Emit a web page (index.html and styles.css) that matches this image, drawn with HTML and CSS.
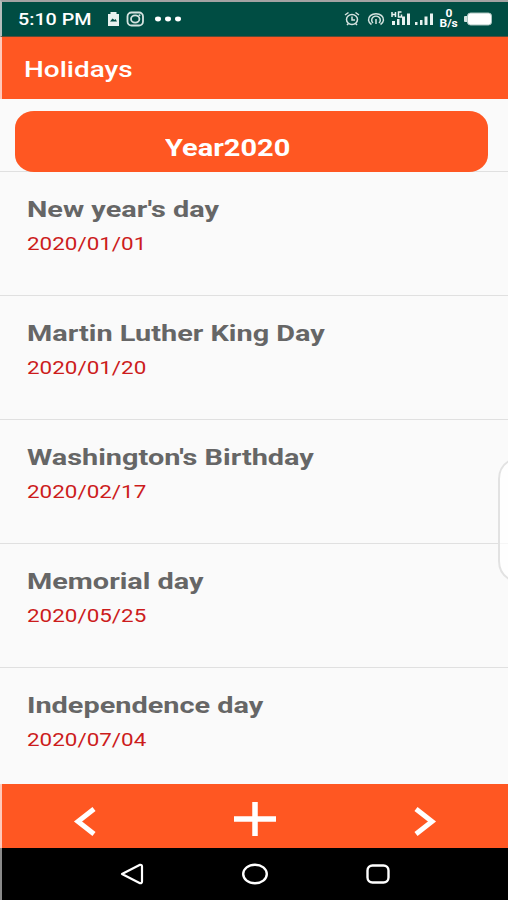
FILE: index.html
```html
<!DOCTYPE html>
<html lang="en">
<head>
  <meta charset="UTF-8">
  <title>Holidays</title>
  <link rel="stylesheet" href="styles.css">
</head>
<body>

<div class="statusbar">
  <span class="time wide">5:10 PM</span>
  <svg class="status-left" width="78" height="20" viewBox="0 0 78 20">
    <path d="M1 5h11v12H1z M3.500 3h6v3h-6z" fill="#e8f2f0"/>
    <path d="M3 12.500l2.500-3 2 1.500 1-1 1.500 2.500z" fill="#004d43"/>
    <rect x="20.500" y="3.500" width="15.500" height="13" rx="4" fill="none" stroke="#d5e3e0" stroke-width="1.800"/>
    <ellipse cx="28.200" cy="10" rx="4.200" ry="3.600" fill="none" stroke="#d5e3e0" stroke-width="1.800"/>
    <circle cx="32.500" cy="6.300" r="1" fill="#d5e3e0"/>
    <g fill="#fff">
      <ellipse cx="51" cy="10" rx="3" ry="2.400"/>
      <ellipse cx="61" cy="10" rx="3" ry="2.400"/>
      <ellipse cx="71" cy="10" rx="3" ry="2.400"/>
    </g>
  </svg>
  <svg class="status-mid" width="90" height="20" viewBox="0 0 90 20">
    <g fill="none" stroke="#d5e3e0" stroke-width="1.500">
      <ellipse cx="8" cy="10.500" rx="5.500" ry="5"/>
      <path d="M8 7.500v3.500h3M1 6l3.500-2.500M15 6l-3.500-2.500M4.500 14.500l-1.500 1.500M11.500 14.500l1.500 1.500"/>
      <path d="M27.500 15.500a7.500 6 0 1 1 9 0M29 14a4.300 4 0 1 1 6 0M32 10v5"/>
    </g>
    <g fill="#e8f2f0">
      <path d="M48 12h3v4h-3z M53 10h2.500v6H53z M58 7.500h3v8.500h-3z M63 4.500h3v11.500h-3z"/>
      <path d="M71 13h2.500v3H71z M76 11h2.500v5H76z M80.500 7.500h3v8.500h-3z M86 4.500h3v11.500h-3z"/>
    </g>
    <path d="M48 3v5M48 5.500h3.500M51.500 3v5M57.500 3h-3v5h3v-2.500" fill="none" stroke="#e8f2f0" stroke-width="1.500"/>
  </svg>
  <div class="speed"><span>0</span><span>B/s</span></div>
  <svg class="battery" width="30" height="14" viewBox="0 0 30 14">
    <rect x="1" y="4" width="4" height="6" rx="1" fill="#d5e3e0"/>
    <rect x="4.500" y="1" width="24" height="12" rx="3" fill="#fff" stroke="#a9c4bf"/>
  </svg>
</div>

<header class="toolbar"><span class="wide">Holidays</span></header>

<main class="content">
  <div class="year"><span class="wide">Year2020</span></div>

  <ul class="holidays">
    <li>
      <span class="name wide">New year's day</span>
      <span class="date wide">2020/01/01</span>
    </li>
    <li>
      <span class="name wide">Martin Luther King Day</span>
      <span class="date wide">2020/01/20</span>
    </li>
    <li>
      <span class="name wide">Washington's Birthday</span>
      <span class="date wide">2020/02/17</span>
    </li>
    <li>
      <span class="name wide">Memorial day</span>
      <span class="date wide">2020/05/25</span>
    </li>
    <li>
      <span class="name wide">Independence day</span>
      <span class="date wide">2020/07/04</span>
    </li>
  </ul>
</main>

<svg class="edge-handle" width="10" height="122" viewBox="0 0 10 122">
  <path d="M11 2Q1 8 1 20V102Q1 114 11 120" fill="#fff" fill-opacity="0.7" stroke="#e2e2e2" stroke-width="2"/>
</svg>

<footer class="actions">
  <svg class="arrow" width="24" height="30" viewBox="0 0 24 30">
    <path d="M21 3L5 15.500L21 28" fill="none" stroke="#fff" stroke-width="5"/>
  </svg>
  <svg width="44" height="36" viewBox="0 0 44 36">
    <path d="M22 1v34M1 18h42" fill="none" stroke="#fff" stroke-width="5.500"/>
  </svg>
  <svg class="arrow" width="24" height="30" viewBox="0 0 24 30">
    <path d="M3 3l16 12.500L3 28" fill="none" stroke="#fff" stroke-width="5"/>
  </svg>
</footer>

<nav class="navbar">
  <svg width="28" height="24" viewBox="0 0 28 24">
    <path d="M4 12L22 2.800Q24 2.500 24 4.500V19.500Q24 21.500 22 21.200Z" fill="none" stroke="#fff" stroke-width="2.200" stroke-linejoin="round"/>
  </svg>
  <svg width="28" height="24" viewBox="0 0 28 24">
    <ellipse cx="14" cy="12" rx="11.800" ry="9.300" fill="none" stroke="#fff" stroke-width="2.400"/>
  </svg>
  <svg width="28" height="24" viewBox="0 0 28 24">
    <rect x="3.500" y="3.500" width="21" height="17" rx="5" fill="none" stroke="#fff" stroke-width="2.400"/>
  </svg>
</nav>

</body>
</html>
```

FILE: styles.css
```css
* {
  box-sizing: border-box;
}

body {
  margin: 0;
  height: 900px;
  display: flex;
  flex-direction: column;
  background: #fafafa;
  font-family: Roboto, sans-serif;
  overflow: hidden;
  position: relative;
}

.wide {
  display: inline-block;
  white-space: nowrap;
  transform: scaleX(1.27);
  transform-origin: left center;
}

.statusbar {
  height: 37px;
  flex: none;
  display: flex;
  align-items: center;
  background: #004d43;
  border-top: 2px solid #a3a3a3;
  border-left: 2px solid #b5bdbb;
  border-bottom: 1px solid #5c4b38;
  color: #fff;
  padding: 0 15px 0 16px;
}

.time {
  width: 89px;
  font-size: 17px;
  font-weight: 500;
  transform: scaleX(1.16);
}

.status-mid {
  margin-left: auto;
}

.speed {
  width: 20px;
  margin: 0 4px 0 5px;
  display: flex;
  flex-direction: column;
  align-items: center;
  font-size: 10px;
  font-weight: 700;
  line-height: 10px;
}

.speed span {
  transform: scaleX(1.2);
}

.toolbar {
  height: 62px;
  flex: none;
  background: #ff5722;
  border-left: 2px solid #ffc9bb;
  color: #fff;
  font-size: 22px;
  font-weight: 500;
  line-height: 66px;
  padding-left: 22px;
}

.content {
  height: 685px;
  flex: none;
  padding-top: 12px;
  overflow: hidden;
}

.year {
  position: relative;
  height: 61px;
  margin: 0 20px 0 15px;
  background: #ff5722;
  border-radius: 19px / 17px;
  color: #fff;
  font-size: 23px;
  font-weight: 700;
  line-height: 76px;
  padding-left: 150px;
}

.year .wide {
  transform: scaleX(1.26);
}

.holidays {
  list-style: none;
  margin: -0.600px 0 0;
  padding: 0;
}

.holidays li {
  height: 124px;
  border-top: 1px solid #e0e0e0;
  padding: 24px 0 0 26.600px;
  display: flex;
  flex-direction: column;
  align-items: flex-start;
}

.name {
  font-size: 22px;
  font-weight: 700;
  line-height: 28px;
  color: #666;
  transform: scaleX(1.312);
}

.date {
  margin-top: 8px;
  font-size: 18px;
  line-height: 24px;
  color: #cc1c1c;
  transform: scaleX(1.245);
}

.edge-handle {
  position: absolute;
  right: 0;
  top: 459px;
}

.actions {
  height: 64px;
  flex: none;
  display: flex;
  align-items: center;
  justify-content: space-between;
  background: #ff5722;
  border-left: 2px solid #ffc9bb;
  padding: 6px 71px 0 71px;
}

.arrow {
  margin-top: 3px;
}

.navbar {
  flex: 1;
  display: flex;
  align-items: center;
  justify-content: space-between;
  background: #000;
  border-left: 2px solid #8a8a8a;
  padding: 0 116px 0 116px;
}
```
